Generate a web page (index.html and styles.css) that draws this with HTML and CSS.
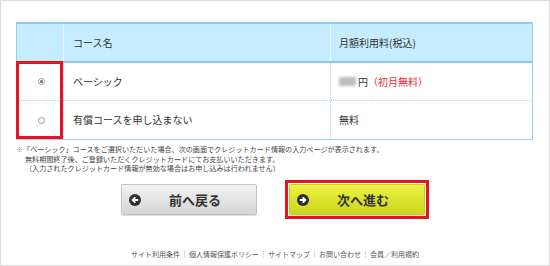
FILE: index.html
```html
<!DOCTYPE html>
<html lang="ja">
<head>
<meta charset="utf-8">
<link rel="stylesheet" href="styles.css">
</head>
<body>
<div class="frame">
  <div class="table">
    <div class="row head">
      <div class="c1"></div>
      <div class="c2">コース名</div>
      <div class="c3">月額利用料(税込)</div>
    </div>
    <div class="body">
      <div class="redbox"></div>
      <div class="row r1">
        <div class="c1"><span class="radio on"></span></div>
        <div class="c2">ベーシック</div>
        <div class="c3"><span class="blur"></span>円<span class="red">（初月無料）</span></div>
      </div>
      <div class="row r2">
        <div class="c1"><span class="radio"></span></div>
        <div class="c2">有償コースを申し込まない</div>
        <div class="c3">無料</div>
      </div>
    </div>
  </div>
  <div class="notes">
    <p><span class="mark">※</span>「ベーシック」コースをご選択いただいた場合、次の画面でクレジットカード情報の入力ページが表示されます。</p>
    <p class="ind">無料期間終了後、ご登録いただくクレジットカードにてお支払いいただきます。</p>
    <p class="ind">（入力されたクレジットカード情報が無効な場合はお申し込みは行われません）</p>
  </div>
  <div class="buttons">
    <div class="btn back">
      <svg class="ico" width="12" height="12" viewBox="0 0 12 12"><circle cx="6" cy="6" r="6" fill="#2f2f2f"/><path d="M8.5 6H3.8M5.8 3.8L3.6 6l2.2 2.2" stroke="#fff" stroke-width="1.8" fill="none" stroke-linecap="round" stroke-linejoin="round"/></svg>
      <span>前へ戻る</span>
    </div>
    <div class="redwrap">
      <div class="btn next">
        <svg class="ico" width="12" height="12" viewBox="0 0 12 12"><circle cx="6" cy="6" r="6" fill="#2f2f2f"/><path d="M3.5 6h4.7M6.2 3.8L8.4 6 6.2 8.2" stroke="#fff" stroke-width="1.8" fill="none" stroke-linecap="round" stroke-linejoin="round"/></svg>
        <span>次へ進む</span>
      </div>
    </div>
  </div>
  <div class="footer">
    <span>サイト利用条件</span><span class="sep">｜</span><span>個人情報保護ポリシー</span><span class="sep">｜</span><span>サイトマップ</span><span class="sep">｜</span><span>お問い合わせ</span><span class="sep">｜</span><span>会員／利用規約</span>
  </div>
</div>
</body>
</html>
```
FILE: styles.css
```css
html, body {
  margin: 0;
  padding: 0;
  background: #fff;
}
body {
  font-family: "Noto Sans CJK JP", "Noto Sans", sans-serif;
  color: #333;
}
.frame {
  width: 550px;
  height: 266px;
  box-sizing: border-box;
  border: 1px solid #dcdcdc;
  padding: 21px 0 0 15px;
}
.table {
  width: 517px;
  box-sizing: border-box;
  border: 1px solid #9ccff0;
  border-top: 2px solid #93cbef;
}
.row {
  display: grid;
  grid-template-columns: 46px 267px 1fr;
  font-size: 10px;
  line-height: 12px;
}
.row > div {
  display: flex;
  align-items: center;
}
.head {
  height: 37px;
  background: #c6edff;
  border-bottom: 2px solid #8dc8ee;
}
.head .c2, .head .c3 {
  border-left: 1px solid #eef9ff;
}
.c2 { padding-left: 9px; }
.c3 { padding-left: 8px; }
.body { position: relative; }
.r1 { height: 37px; border-bottom: 1px dotted #aad6f3; }
.r2 { height: 38px; }
.body .c2, .body .c3 { border-left: 1px dotted #b6dcf5; }
.c1 { justify-content: center; }
.radio {
  width: 7px;
  height: 7px;
  border: 1px solid #9a9a9a;
  border-radius: 50%;
  box-sizing: border-box;
  background: #fff;
  position: relative;
  margin-left: 3px;
}
.radio.on::after {
  content: "";
  position: absolute;
  left: 1px; top: 1px;
  width: 3px; height: 3px;
  border-radius: 50%;
  background: #666;
}
.redbox {
  position: absolute;
  left: -1px;
  top: -2px;
  width: 47px;
  height: 78px;
  box-sizing: border-box;
  border: 3px solid #e8141f;
  pointer-events: none;
}
.blur {
  display: inline-block;
  width: 17px;
  height: 9px;
  background: #bdbdbd;
  filter: blur(1.5px);
  margin-right: 2px;
}
.red { color: #f0272d; }
.notes {
  margin-top: 5px;
  font-size: 7.1px;
  line-height: 9.5px;
  color: #444;
}
.notes p { margin: 0; white-space: nowrap; }
.notes .mark { color: #a07ab0; }
.notes .ind { padding-left: 9px; }
.buttons {
  display: flex;
  align-items: center;
  justify-content: center;
  gap: 28px;
  margin-top: 6px;
  padding-right: 15px;
}
.btn {
  width: 136px;
  height: 31px;
  box-sizing: border-box;
  border-radius: 2px;
  display: flex;
  align-items: center;
  position: relative;
  font-size: 13px;
  font-weight: bold;
  color: #333;
}
.btn .ico { position: absolute; left: 7px; top: 9.5px; }
.btn span { flex: 1; text-align: center; padding-left: 12px; }
.back {
  background: linear-gradient(#f2f2f2, #d6d6d6);
  border: 1px solid #c4c4c4;
  box-shadow: 0 1px 1px rgba(0,0,0,0.15);
}
.redwrap {
  border: 3px solid #e8141f;
  padding: 1px;
}
.next {
  background: linear-gradient(#eaf244, #cbd71c);
  border: 1px solid #c3ce1e;
  box-shadow: 0 1px 1px rgba(0,0,0,0.15);
}
.footer {
  margin-top: 30px;
  text-align: center;
  font-size: 7px;
  line-height: 10px;
  color: #555;
  padding-right: 15px;
}
.footer .sep { margin: 0 1px; color: #888; }
```
